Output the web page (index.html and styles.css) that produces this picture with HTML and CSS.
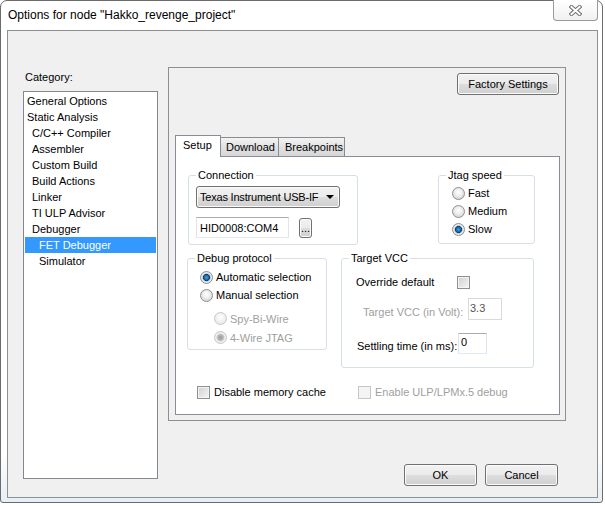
FILE: index.html
```html
<!DOCTYPE html>
<html>
<head>
    <meta charset="utf-8" />
    <title>Options for node "Hakko_revenge_project"</title>
    <link rel="stylesheet" href="styles.css">
</head>
<body>
    <div class="ventana">
        <div class="barraTitulo">
            <span class="tituloTexto">Options for node "Hakko_revenge_project"</span>
            <div class="cerrar">
                <svg width="13" height="11" viewBox="0 0 13 11">
                    <path d="M2.5 2 L10.5 9 M10.5 2 L2.5 9" stroke="#6f6f6f" stroke-width="4" stroke-linecap="square" fill="none" />
                    <path d="M2.5 2 L10.5 9 M10.5 2 L2.5 9" stroke="#ffffff" stroke-width="2" stroke-linecap="square" fill="none" />
                </svg>
            </div>
        </div>

        <div class="cliente">

            <div class="categoria">
                <div class="categoriaTitulo">Category:</div>
                <ul class="lista">
                    <li class="nivel1">General Options</li>
                    <li class="nivel1">Static Analysis</li>
                    <li class="nivel2">C/C++ Compiler</li>
                    <li class="nivel2">Assembler</li>
                    <li class="nivel2">Custom Build</li>
                    <li class="nivel2">Build Actions</li>
                    <li class="nivel2">Linker</li>
                    <li class="nivel2">TI ULP Advisor</li>
                    <li class="nivel2">Debugger</li>
                    <li class="nivel3 seleccionado">FET Debugger</li>
                    <li class="nivel3">Simulator</li>
                </ul>
            </div>

            <div class="panel">
                <div class="panelArriba">
                    <div class="boton botonFabrica">Factory Settings</div>
                </div>

                <div class="pestanas">
                    <div class="pestana activa">Setup</div>
                    <div class="pestana pDownload">Download</div>
                    <div class="pestana pBreak">Breakpoints</div>
                </div>

                <div class="paginaPestana">

                    <div class="fila fila1">
                        <fieldset class="grupo grupoConexion">
                            <legend>Connection</legend>
                            <div class="cuerpoConexion">
                                <div class="combo">
                                    <span>Texas Instrument USB-IF</span>
                                    <span class="flecha"></span>
                                </div>
                                <div class="lineaPuerto">
                                    <div class="campo campoPuerto">HID0008:COM4</div>
                                    <div class="boton botonPuntos">...</div>
                                </div>
                            </div>
                        </fieldset>

                        <fieldset class="grupo grupoJtag">
                            <legend>Jtag speed</legend>
                            <div class="cuerpoJtag">
                                <div class="opcion"><span class="radio"></span>Fast</div>
                                <div class="opcion"><span class="radio"></span>Medium</div>
                                <div class="opcion"><span class="radio marcado"></span>Slow</div>
                            </div>
                        </fieldset>
                    </div>

                    <div class="fila fila2">
                        <fieldset class="grupo grupoDebug">
                            <legend>Debug protocol</legend>
                            <div class="cuerpoDebug">
                                <div class="opcion"><span class="radio marcado"></span>Automatic selection</div>
                                <div class="opcion"><span class="radio"></span>Manual selection</div>
                                <div class="opcion subopcion primera deshabilitado"><span class="radio"></span>Spy-Bi-Wire</div>
                                <div class="opcion subopcion deshabilitado"><span class="radio marcado"></span>4-Wire JTAG</div>
                            </div>
                        </fieldset>

                        <fieldset class="grupo grupoVcc">
                            <legend>Target VCC</legend>
                            <div class="cuerpoVcc">
                                <div class="vccFila vccOverride">
                                    <span class="etiquetaOverride">Override default</span>
                                    <span class="check"></span>
                                </div>
                                <div class="vccFila vccVolt deshabilitado">
                                    <span class="etiquetaVolt">Target VCC (in Volt):</span>
                                    <div class="campo campoVolt">3.3</div>
                                </div>
                                <div class="vccFila vccSettling">
                                    <span class="etiquetaSettling">Settling time (in ms):</span>
                                    <div class="campo campoSettling">0</div>
                                </div>
                            </div>
                        </fieldset>
                    </div>

                    <div class="fila fila3">
                        <div class="chequeo chequeoCache"><span class="check"></span>Disable memory cache</div>
                        <div class="chequeo deshabilitado"><span class="check"></span>Enable ULP/LPMx.5 debug</div>
                    </div>

                </div>
            </div>

            <div class="botonera">
                <div class="boton botonDialogo">OK</div>
                <div class="boton botonDialogo">Cancel</div>
            </div>
        </div>
    </div>
</body>
</html>
```

FILE: styles.css
```css
body {
    margin: 0;
    background-color: #ffffff;
    font-family: "Liberation Sans", Arial, sans-serif;
    font-size: 11px;
    color: #000000;
}

.ventana {
    width: 603px;
    height: 503px;
    box-sizing: border-box;
    border: 1px solid #6b6b6b;
    border-radius: 7px 7px 3px 3px;
    background: linear-gradient(#ffffff 90%, #e6eef7);
}

.barraTitulo {
    height: 29px;
    display: flex;
    justify-content: space-between;
    align-items: flex-start;
}
.tituloTexto {
    font-size: 12px;
    line-height: 29px;
    padding-left: 7px;
    color: #000000;
}
.cerrar {
    width: 45px;
    height: 21px;
    box-sizing: border-box;
    margin-top: -1px;
    margin-right: 4px;
    border: 1px solid #9a9a9a;
    border-top: none;
    border-radius: 0 0 4px 4px;
    background: linear-gradient(#ffffff, #f1f1f1);
    display: flex;
    justify-content: center;
    align-items: center;
}

.cliente {
    height: 468px;
    box-sizing: border-box;
    margin: 0 4px 0 6px;
    border: 1px solid #8e8f8f;
    background-color: #f0f0f0;
    display: grid;
    grid-template-columns: 160px 1fr;
    grid-template-rows: auto 1fr;
    align-items: start;
    padding-top: 36px;
}

.categoria {
    grid-row: 1 / 3;
    margin-left: 15px;
    width: 135px;
}
.categoriaTitulo {
    padding-top: 4px;
    line-height: 13px;
    margin-bottom: 7px;
    padding-left: 2px;
}
.lista {
    list-style: none;
    margin: 0;
    padding: 1px 0 0 0;
    height: 388px;
    box-sizing: border-box;
    border: 1px solid #828790;
    background-color: #ffffff;
}
.lista li {
    line-height: 16px;
    height: 16px;
}
.nivel1 {
    padding-left: 3px;
}
.nivel2 {
    padding-left: 8px;
}
.nivel3 {
    padding-left: 15px;
}
.seleccionado {
    background-color: #3399ff;
    color: #ffffff;
    margin: 0 1px;
    padding-left: 14px;
}

.panel {
    width: 398px;
    height: 354px;
    box-sizing: border-box;
    border: 1px solid #8e8f8f;
    display: flex;
    flex-direction: column;
}
.panelArriba {
    display: flex;
    justify-content: flex-end;
    padding: 5px 6px 0 0;
}

.boton {
    box-sizing: border-box;
    border: 1px solid #707070;
    border-radius: 3px;
    background: linear-gradient(#f2f2f2, #ebebeb 48%, #dddddd 52%, #cfcfcf);
    box-shadow: inset 0 0 0 1px #fbfbfb;
    display: flex;
    justify-content: center;
    align-items: center;
}
.botonFabrica {
    width: 102px;
    height: 22px;
}

.pestanas {
    display: flex;
    align-items: flex-end;
    margin-top: 40px;
    margin-left: 6px;
    height: 21px;
}
.pestana {
    box-sizing: border-box;
    height: 19px;
    border: 1px solid #898c95;
    border-bottom: none;
    border-left: none;
    background: linear-gradient(#f3f3f3, #e2e2e2 50%, #d6d6d6);
    display: flex;
    align-items: center;
    padding-left: 5px;
}
.activa {
    height: 22px;
    margin-bottom: -1px;
    border-left: 1px solid #898c95;
    background: #ffffff;
    width: 46px;
    padding-left: 7px;
    padding-bottom: 4px;
    position: relative;
}
.pDownload {
    width: 58px;
}
.pBreak {
    width: 66px;
    padding-left: 6px;
}

.paginaPestana {
    margin: 0 5px 0 6px;
    height: 259px;
    box-sizing: border-box;
    border: 1px solid #898c95;
    background-color: #ffffff;
}

.fila {
    display: flex;
    align-items: flex-start;
}
.fila1 {
    margin-top: 12px;
    padding-left: 12px;
}
.fila2 {
    margin-top: 7px;
    padding-left: 11px;
}
.fila3 {
    margin-top: 16px;
    padding-left: 21px;
}

.grupo {
    margin: 0;
    padding: 0;
    min-width: 0;
    box-sizing: border-box;
    border: 1px solid #d5dfe5;
    border-radius: 3px;
}
.grupo legend {
    margin-left: 7px;
    padding: 0 2px;
    line-height: 13px;
    height: 13px;
}
.grupoConexion {
    width: 170px;
    height: 76px;
}
.grupoJtag {
    margin-left: 80px;
    width: 97px;
    height: 75px;
}
.grupoDebug {
    width: 140px;
    height: 98px;
}
.grupoVcc {
    margin-left: 14px;
    width: 193px;
    height: 116px;
}

.cuerpoConexion {
    padding: 4px 0 0 7px;
}
.combo {
    width: 144px;
    height: 22px;
    box-sizing: border-box;
    border: 1px solid #707070;
    border-radius: 3px;
    background: linear-gradient(#f2f2f2, #ebebeb 48%, #dddddd 52%, #cfcfcf);
    box-shadow: inset 0 0 0 1px #fbfbfb;
    display: flex;
    justify-content: space-between;
    align-items: center;
    padding: 0 5px 0 3px;
    letter-spacing: -0.2px;
}
.flecha {
    width: 0;
    height: 0;
    border-left: 4px solid transparent;
    border-right: 4px solid transparent;
    border-top: 4px solid #000000;
}
.lineaPuerto {
    display: flex;
    align-items: flex-start;
    margin-top: 9px;
}
.campo {
    box-sizing: border-box;
    border: 1px solid #e2e3ea;
    border-top-color: #abadb3;
    border-bottom-color: #e3e9ef;
    background-color: #ffffff;
    display: flex;
    align-items: center;
}
.campoPuerto {
    width: 93px;
    height: 21px;
    padding-left: 3px;
}
.botonPuntos {
    width: 13px;
    height: 20px;
    margin: 1px 0 0 10px;
    align-items: flex-end;
    padding-bottom: 3px;
}

.opcion {
    display: flex;
    align-items: center;
    height: 18px;
    gap: 3px;
}
.cuerpoJtag {
    padding: 2px 0 0 13px;
}
.cuerpoDebug {
    padding: 3px 0 0 12px;
}
.subopcion {
    height: 19px;
    padding-left: 14px;
}
.primera {
    margin-top: 5px;
}

.radio {
    width: 13px;
    height: 13px;
    box-sizing: border-box;
    border-radius: 50%;
    border: 1px solid #8e8f8f;
    background: radial-gradient(circle at 50% 40%, #ffffff, #f1f1f1 35%, #cfcfcf 90%);
}
.radio.marcado {
    background: radial-gradient(circle, #45a3e6 0, #1c5e97 2.5px, #0e3e66 3.2px, #a9c3d8 3.8px, #eeeeee 4.6px, #cfcfcf 100%);
}
.deshabilitado {
    color: #a0a0a0;
}
.deshabilitado .radio {
    border-color: #c6c6c6;
    background: radial-gradient(circle at 50% 40%, #ffffff, #f4f4f4 40%, #e3e3e3);
}
.deshabilitado .radio.marcado {
    background: radial-gradient(circle, #9a9a9a 0, #b9b9b9 2.8px, #c8c8c8 3.4px, #f2f2f2 4.4px, #e3e3e3 100%);
}

.check {
    width: 13px;
    height: 13px;
    box-sizing: border-box;
    border: 1px solid #8e8f8f;
    box-shadow: inset 0 0 0 1px #f4f4f4;
    background: linear-gradient(135deg, #cfcfcf, #f6f6f6);
}
.deshabilitado .check {
    border-color: #c6c6c6;
    background: #f4f4f4;
}

.cuerpoVcc {
    padding: 8px 0 0 14px;
}
.vccFila {
    display: flex;
    align-items: center;
}
.vccOverride {
    height: 18px;
}
.etiquetaOverride {
    width: 101px;
}
.vccVolt {
    margin-top: 7px;
    height: 22px;
    padding-left: 7px;
}
.etiquetaVolt {
    width: 105px;
    padding-top: 6px;
}
.campoVolt {
    width: 34px;
    height: 22px;
    padding: 0 0 2px 1px;
    color: #555555;
    border-color: #d9d9d9;
}
.vccSettling {
    margin-top: 13px;
    height: 21px;
    padding-left: 1px;
}
.etiquetaSettling {
    width: 101px;
    padding-top: 4px;
}
.campoSettling {
    width: 29px;
    height: 21px;
    padding: 0 0 3px 2px;
}

.chequeo {
    display: flex;
    align-items: center;
    height: 16px;
    gap: 4px;
}
.chequeoCache {
    width: 161px;
}

.botonera {
    grid-column: 2;
    display: flex;
    justify-content: flex-end;
    margin-top: 43px;
    margin-right: 39px;
    gap: 8px;
}
.botonDialogo {
    width: 73px;
    height: 22px;
}
```
